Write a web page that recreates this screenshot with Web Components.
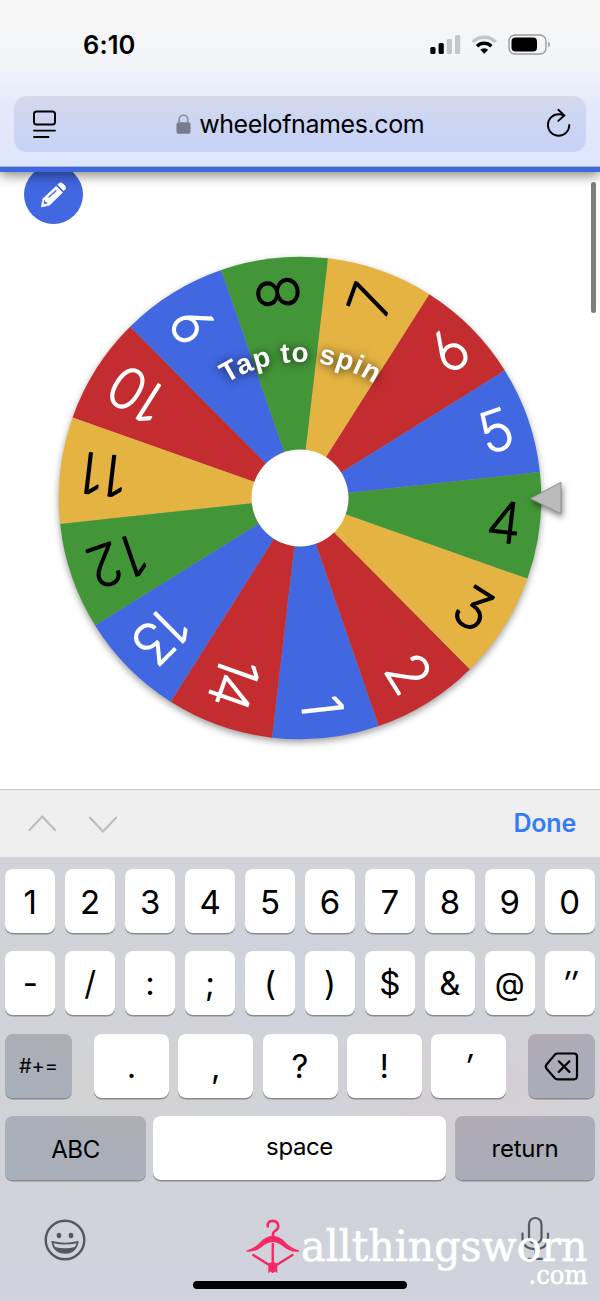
<!DOCTYPE html>
<html lang="en">
<head>
<meta charset="utf-8">
<title>wheelofnames.com</title>
<style>
  html, body { margin: 0; padding: 0; background: #fff; }
  body { width: 600px; height: 1301px; overflow: hidden; color: #000; font-family: Inter, "Liberation Sans", sans-serif; }
</style>
</head>
<body>
<phone-screen>
  <status-bar slot="top" time="6:10"></status-bar>
  <address-bar slot="top">wheelofnames.com</address-bar>
  <edit-button slot="page"></edit-button>
  <name-wheel slot="page" count="14"></name-wheel>
  <form-accessory slot="keys">Done</form-accessory>
  <key-board slot="keys"></key-board>
</phone-screen>

<script>
class Base extends HTMLElement {
  connectedCallback() {
    if (this.shadowRoot) return;
    const t = document.createElement('template');
    t.innerHTML = this.render();
    this.attachShadow({ mode: 'open' }).appendChild(t.content.cloneNode(true));
  }
}

customElements.define('phone-screen', class extends Base {
  render() {
    return `<style>
      :host { display: flex; flex-direction: column; width: 600px; height: 1301px; overflow: hidden; }
      header { height: 172px; box-sizing: border-box; flex: none; position: relative; z-index: 2;
        border-bottom: 5px solid #4167e1;
        background: linear-gradient(#f7f7f7 0, #f3f4f7 62px, #edf0fa 80px, #e3e9fb 105px, #dde6fc 166px, #a9b3cd 166px);
        box-shadow: 0 3px 12px rgba(0,0,0,.5); }
      main { height: 617px; flex: none; position: relative; overflow: hidden; background: #fff; }
      .scroll { position: absolute; left: 591px; top: 10px; width: 4.5px; height: 131px; border-radius: 3px; background: #7f7f7f; }
    </style>
    <header><slot name="top"></slot></header>
    <main><slot name="page"></slot><div class="scroll"></div></main>
    <slot name="keys"></slot>`;
  }
});

customElements.define('status-bar', class extends Base {
  render() {
    return `<style>
      :host { display: flex; justify-content: space-between; align-items: center; height: 90px; padding: 0 49px 0 83px; box-sizing: border-box; }
      b { font-weight: 600; font-size: 25.5px; letter-spacing: .1px; line-height: 30px; }
      svg { display: block; }
    </style>
    <b>${this.getAttribute('time')}</b>
    <svg width="121" height="24" viewBox="430 33 121 24">
      <rect x="430.3" y="47" width="5.2" height="7" rx="1.5"/><rect x="438.6" y="43" width="5.2" height="11" rx="1.5"/>
      <rect x="446.8" y="39" width="5.2" height="15" rx="1.5" fill="#c4c5c8"/><rect x="455" y="35" width="5.2" height="19" rx="1.5" fill="#c4c5c8"/>
      <g fill="none" stroke-width="3.4">
        <path d="M472.8 42a16.2 16.2 0 0 1 22.9 0" stroke="#c4c5c8"/>
        <path d="M477 46.2a10.2 10.2 0 0 1 14.4 0" stroke="#000"/>
      </g>
      <path d="M480.3 49.7a5.9 5.9 0 0 1 7.9 0l-3.9 4.1z"/>
      <rect x="509" y="35" width="37" height="19" rx="6" fill="none" stroke="#9b9c9f" stroke-width="1.4"/>
      <rect x="511.5" y="37.5" width="25.5" height="14" rx="4"/>
      <path d="M548.2 41.6q1.7 1 1.7 3t-1.7 3z" fill="#9b9c9f"/>
    </svg>`;
  }
});

customElements.define('address-bar', class extends Base {
  render() {
    return `<style>
      :host { display: grid; grid-template-columns: 60px 1fr 60px; align-items: center; height: 56px; margin: 6px 14px 0; border-radius: 13px;
        background: linear-gradient(#d3daea, #ccd6f2 40%, #c6d2f7); }
      svg { display: block; }
      .site { display: flex; justify-content: center; align-items: center; gap: 8.500px; font-size: 25px; line-height: 30px; letter-spacing: -0.4px; }
      .site svg { margin-top: -1px; }
    </style>
    <svg width="60" height="56" viewBox="14 96 60 56" fill="none" stroke="#000" stroke-width="1.9" stroke-linecap="round">
      <rect x="34" y="111.5" width="21" height="13" rx="2.6"/><path d="M34 130.6h21M34 137h14.5"/></svg>
    <div class="site">
      <svg width="15" height="20" viewBox="0 0 15 20"><rect x="0.5" y="8.3" width="14" height="11.4" rx="2" fill="#777b8b"/><path d="M3.2 9V5.4a4.3 4.3 0 0 1 8.6 0V9" fill="none" stroke="#8c90a0" stroke-width="1.7"/></svg>
      <span><slot></slot></span>
    </div>
    <svg width="60" height="56" viewBox="526 96 60 56" fill="none" stroke="#000" stroke-width="1.9" stroke-linecap="round">
      <path d="M569.3 125a10.7 10.7 0 1 1-10.7-10.7q2.6 0 5 .9"/><path d="M558.3 109.8l6 5.7-6 5.4"/></svg>`;
  }
});

customElements.define('edit-button', class extends Base {
  render() {
    return `<style>
      :host { display: flex; align-items: center; justify-content: center; width: 59px; height: 59px; margin: -7px 0 0 24px; border-radius: 50%; background: #4167e1; }
      svg { display: block; }
    </style>
    <svg width="59" height="59" viewBox="24 165 59 59">
      <path d="M41.300 207l1.500-8.200L56.200 186.300l6.300 6.200L49.400 205.200z" fill="#fff" stroke="#fff" stroke-width=".6" stroke-linejoin="round"/>
      <path d="M57.900 184.500l1.800-1.300q1.700-.6 3.200.7l2.100 2.200q1 1.600-.1 3.200l-1.300 1.400z" fill="#fff" stroke="#fff" stroke-linejoin="round"/>
      <path d="M48.600 197.400l7.800-7.200" stroke="#4167e1" stroke-width="1.300"/>
      <path d="M44.500 199.500l.9 2.400 2.600.9-3.100 1.500-1.200-1.200z" fill="#4167e1"/>
    </svg>`;
  }
});

customElements.define('name-wheel', class extends Base {
  render() {
    const n = +this.getAttribute('count'), step = 360 / n, start = -6.2;
    const blue = '#4167e1', red = '#c32d2f', green = '#439638', gold = '#e5b341';
    const fills = [blue, red, gold, green, blue, red, gold, green, blue, red, gold, green, blue, red];
    /* radius of the centre of every digit, per entry */
    const radii = [[209], [206.5], [205.5], [205.5], [207], [209], [210], [206.5], [204], [176, 204.6], [186, 209.500], [175.500, 206.5], [180.500, 205.8], [181.500, 205.8]];
    const cx = 300, cy = 498, R = 241.3;
    const pt = a => [cx + R * Math.cos(a * Math.PI / 180), cy + R * Math.sin(a * Math.PI / 180)].map(v => v.toFixed(2)).join(' ');
    let slices = '', labels = '';
    for (let i = 0; i < n; i++) {
      const a = start + (3 - i) * step, mid = a + step / 2;
      const ink = fills[i] === gold || fills[i] === green ? '#000' : '#fff';
      slices += `<path d="M${cx} ${cy}L${pt(a)}A${R} ${R} 0 0 1 ${pt(a + step)}Z" fill="${fills[i]}"/>`;
      labels += `<text transform="translate(${cx} ${cy}) rotate(${mid.toFixed(2)})" y="20.500" fill="${ink}" stroke="${ink}">` +
        String(i + 1).split('').map((d, k) => `<tspan x="${radii[i][k]}">${d}</tspan>`).join('') + `</text>`;
    }
    return `<style>
      :host { display: block; height: 565px; }
      svg { display: block; }
      .num text { font: 200 56px Inter, "Open Sans", sans-serif; text-anchor: middle; stroke-width: 1.600; stroke-linejoin: round; font-feature-settings: "cv03", "cv04", "cv09"; }
      .wheel { filter: drop-shadow(0 3.500px 3.500px rgba(0,0,0,.38)); }
      .tap { font: bold 28px "Liberation Sans", sans-serif; fill: #fff; filter: drop-shadow(0 1px 5px rgba(0,0,0,.75)); }
      .pin { filter: drop-shadow(1px 3px 3px rgba(0,0,0,.5)); }
    </style>
    <svg width="600" height="565" viewBox="0 224 600 565">
      <g class="wheel">${slices}</g>
      <g class="num">${labels}</g>
      <circle cx="300" cy="498" r="48.5" fill="#fff"/>
      <path id="arc" d="M164 498a136 136 0 0 1 272 0" fill="none"/>
      <text class="tap" text-anchor="middle" textLength="156"><textPath href="#arc" startOffset="50.100%" textLength="156">Tap to spin</textPath></text>
      <path class="pin" d="M530.500 498.500L561 482.300V514z" fill="#bbb" stroke="#909090" stroke-width="1"/>
    </svg>`;
  }
});

customElements.define('form-accessory', class extends Base {
  render() {
    return `<style>
      :host { display: flex; align-items: center; justify-content: space-between; height: 68px; flex: none; box-sizing: border-box;
        padding: 0 24px 0 27px; background: #efefef; border-top: 1px solid #c4c4c6; }
      svg { display: block; }
      span { font-size: 25px; font-weight: 600; color: #347bf7; letter-spacing: -.2px; margin-top: -2px; }
    </style>
    <svg width="92" height="20" viewBox="27 813 92 20" fill="none" stroke="#bebebe" stroke-width="2.300" stroke-linecap="round" stroke-linejoin="round">
      <path d="M29.500 829L42.300 815.500 55 829M90 816.700L103 830.500 116 816.700"/></svg>
    <span><slot></slot></span>`;
  }
});

customElements.define('key-cap', class extends Base {
  render() {
    return `<style>
      :host { display: flex; align-items: center; justify-content: center; height: 64px; border-radius: 8px; background: #fff;
        box-shadow: 0 1.500px 0 #898a8d; font-size: 33px; line-height: 40px; box-sizing: border-box; }
      :host([word]) { font-size: 24px; }
      :host([tone="left"]) { background: linear-gradient(20deg, #a8b0bc, #abaeb8 55%, #adaeb0); }
      :host([tone="right"]) { background: linear-gradient(160deg, #b0abb4, #acacb7 50%, #a9adba); }
      span { display: block; transform: translateY(var(--dy, 1px)); letter-spacing: var(--ls, 0); white-space: pre; }
    </style><span><slot></slot></span>`;
  }
});

customElements.define('key-board', class extends Base {
  render() {
    const caps = s => s.map(c => `<key-cap>${c}</key-cap>`).join('');
    return `<style>
      :host { display: flex; flex-direction: column; gap: 18.400px; height: 444px; flex: none; box-sizing: border-box; padding: 12px 5px 0; position: relative;
        background: radial-gradient(ellipse 150px 60px at 470px 225px, #d6ced5, transparent), radial-gradient(ellipse 160px 60px at 130px 225px, #d2d2d1, transparent),
          radial-gradient(ellipse 120px 80px at 290px 110px, #cdd2dd, transparent), linear-gradient(#d1d3d9, #d1d2d7 60%, #d0d3dc); }
      .row { display: grid; grid-template-columns: repeat(10, 1fr); gap: 9.500px; }
      .r2 { --dy: -.5px; }
      .r3 { display: flex; justify-content: space-between; gap: 0; --dy: 0px; }
      .mid { display: flex; gap: 9.250px; }
      .mid > * { width: 75px; }
      .side { width: 67px; }
      .r4 { grid-template-columns: 141px 293px 140px; gap: 0; column-gap: 7px; justify-content: start; }
      .r4 > :last-child { margin-left: 2px; margin-right: -2px; }
      .foot { display: flex; justify-content: space-between; align-items: flex-start; padding: 16px 43.500px 0 39px; }
      .foot svg:first-child { margin-top: 4px; }
      svg { display: block; }
      .home { position: absolute; left: 193px; top: 424px; width: 214px; height: 8px; border-radius: 4px; background: #000; }
      water-mark { position: absolute; left: 240px; top: 353px; }
    </style>
    <div class="row">${caps([...'1234567890'])}</div>
    <div class="row r2">${caps(['-', '/', ':', ';', '(', ')', '$', '&amp;', '<span style="font-size:31px">@</span>', '<i>″</i>'])}</div>
    <div class="row r3">
      <key-cap class="side" tone="left" style="font-size:20px">#+=</key-cap>
      <div class="mid">${caps(['.', ',', '?', '!', '<i>′</i>'])}</div>
      <key-cap class="side" tone="right"><svg width="36" height="30" viewBox="544 1050 36 30" fill="none" stroke="#000" stroke-width="2.200" stroke-linejoin="round" stroke-linecap="round">
        <path d="M557.500 1052.500H574q3 0 3 3v19.800q0 3-3 3H557.500q-1.500 0-2.600-1.100l-8.300-9.500q-1.600-2.100 0-4.200l8.300-9.900q1.100-1.100 2.600-1.100z"/><path d="M558.800 1060.300l10.600 10.600M569.400 1060.300l-10.600 10.600"/></svg></key-cap>
    </div>
    <div class="row r4">
      <key-cap word tone="left" style="--dy:2px;--ls:-.4px">ABC</key-cap><key-cap word style="--dy:-1px;--ls:-.4px">space</key-cap><key-cap word tone="right" style="--ls:-.2px">return</key-cap>
    </div>
    <div class="foot">
      <svg width="42" height="42" viewBox="0 0 42 42"><circle cx="21" cy="21" r="19.300" fill="none" stroke="#54575d" stroke-width="2.400"/>
        <ellipse cx="15" cy="16.500" rx="2.300" ry="2.800" fill="#54575d"/><ellipse cx="27" cy="16.500" rx="2.300" ry="2.800" fill="#54575d"/>
        <path d="M8.200 22.700q12.800 3.400 25.600 0q-1.800 11.300-12.800 11.300t-12.800-11.300z" fill="#54575d" stroke="#54575d" stroke-width="1.500" stroke-linejoin="round"/>
        <path d="M9.500 24.300q11.500 2.600 23 0q-.5 2.200-1.600 3.700q-9.900 2.400-19.800 0q-1.100-1.500-1.600-3.700z" fill="#d1d3d9"/></svg>
      <svg width="34" height="46" viewBox="517.500 1215 34 46" fill="none" stroke="#555960" stroke-width="2.200" stroke-linecap="round">
        <rect x="528.500" y="1218" width="12.500" height="25.500" rx="6.200"/><path d="M522 1233.500v4q0 11.500 12.700 11.500t12.800-11.500v-4M534.700 1250v8M528 1258.800h14"/></svg>
    </div>
    <div class="home"></div>
    <water-mark></water-mark>`;
  }
});

customElements.define('water-mark', class extends Base {
  render() {
    return `<style>
      :host { display: block; width: 360px; height: 91px; }
      svg { display: block; }
      text { font-family: "DejaVu Serif", serif; fill: #fff; stroke: #fff; stroke-width: .6; }
    </style>
    <svg width="360" height="91" viewBox="240 1210 360 91">
      <g fill="none" stroke="#f62a68">
        <path d="M267.800 1226.500q-.8-5.300 4.800-5.600q5.700.3 5.700 5.400q0 3-3.500 4.800q-1.900 1-1.900 3.400v2.500" stroke-width="2.600" stroke-linecap="round"/>
        <path d="M272.800 1243v23M252.500 1254.500l17.500 11M293.300 1254.500l-17.500 11" stroke-width="2.500"/>
      </g>
      <path d="M246.500 1250.500q8.500-2.500 14-8.500q5.500-6 12.300-6.200q6.800.2 12.300 6.200q5.500 6 14 8.500v1.200q-7 .8-13.500-3.500q-7.500-6.200-12.800-6.200t-12.800 6.200q-6.500 4.300-13.500 3.500z" fill="#f62a68"/>
      <path d="M268.300 1263.500l4.500-1.700 4.500 1.700v9.800l-2.200-1.800-2.300 1.800-2.300-1.800-2.200 1.800z" fill="#f62a68"/>
      <text x="301" y="1260.500" font-size="43" textLength="286.500" lengthAdjust="spacingAndGlyphs">allthingsworn</text>
      <text x="528.500" y="1283.500" font-size="26" textLength="59" lengthAdjust="spacingAndGlyphs">.com</text>
    </svg>`;
  }
});
</script>
</body>
</html>
